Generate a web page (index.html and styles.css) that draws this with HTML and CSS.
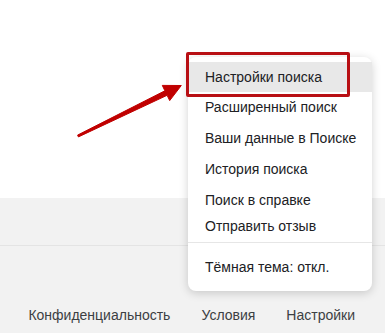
FILE: index.html
```html
<!DOCTYPE html>
<html lang="ru">
<head>
    <meta charset="UTF-8">
    <meta name="viewport" content="width=device-width, initial-scale=1.0">
    <title>Настройки поиска</title>
    <link rel="stylesheet" href="styles.css">
</head>
<body>
    <div class="page">
        <div class="top"></div>
        <div class="footer">
            <div class="footer-row"></div>
            <div class="footer-links">
                <a href="#">Конфиденциальность</a>
                <a href="#">Условия</a>
                <a href="#">Настройки</a>
            </div>
        </div>

        <div class="menu">
            <a class="item active" href="#">Настройки поиска</a>
            <a class="item" href="#">Расширенный поиск</a>
            <a class="item" href="#">Ваши данные в Поиске</a>
            <a class="item" href="#">История поиска</a>
            <a class="item" href="#">Поиск в справке</a>
            <a class="item short" href="#">Отправить отзыв</a>
            <div class="sep"></div>
            <a class="item dark" href="#">Тёмная тема: откл.</a>
            <div class="mark"></div>
        </div>

        <svg class="arrow" width="385" height="333" viewBox="0 0 385 333">
            <polygon points="77.6,135.1 164.9,90.8 162.3,85.4 181.3,85.5 169.7,100.6 167.1,95.3 78.4,136.9"
                     fill="#c00000" stroke="#c00000" stroke-width="1" stroke-linejoin="round"/>
        </svg>
    </div>
</body>
</html>
```

FILE: styles.css
```css
body {
    margin: 0;
    font-family: "Liberation Sans", Arial, sans-serif;
    font-size: 14px;
    color: #202124;
}
.page {
    position: relative;
    width: 385px;
    height: 333px;
    overflow: hidden;
    background: #f2f2f2;
}
.top {
    height: 198px;
    background: #fff;
}
.footer-row {
    height: 47px;
    border-bottom: 1px solid #e4e4e4;
}
.footer-links {
    display: flex;
    justify-content: flex-end;
    gap: 31px;
    padding: 61px 30px 0 0;
    line-height: 17px;
}
.footer-links a {
    color: #3c4043;
    text-decoration: none;
}
.menu {
    position: absolute;
    left: 188px;
    top: 57px;
    width: 184px;
    padding: 5px 0 10px;
    background: #fff;
    border-radius: 8px;
    box-shadow: 0 2px 10px rgba(0, 0, 0, 0.18);
}
.item {
    display: block;
    height: 31px;
    line-height: 31px;
    padding-left: 17px;
    color: #202124;
    text-decoration: none;
}
.item.active {
    background: #e8e8e8;
    height: 30px;
    line-height: 30px;
}
.item.short {
    height: 23px;
    line-height: 21px;
}
.sep {
    border-top: 1px solid #e6e6e6;
    margin: 3px 0 10px;
}
.item.dark {
    height: 28px;
    line-height: 28px;
}
.mark {
    position: absolute;
    left: -2px;
    top: -5px;
    width: 158px;
    height: 39px;
    border: 3px solid #b80f14;
    border-radius: 2px;
}
.arrow {
    position: absolute;
    left: 0;
    top: 0;
}
```
